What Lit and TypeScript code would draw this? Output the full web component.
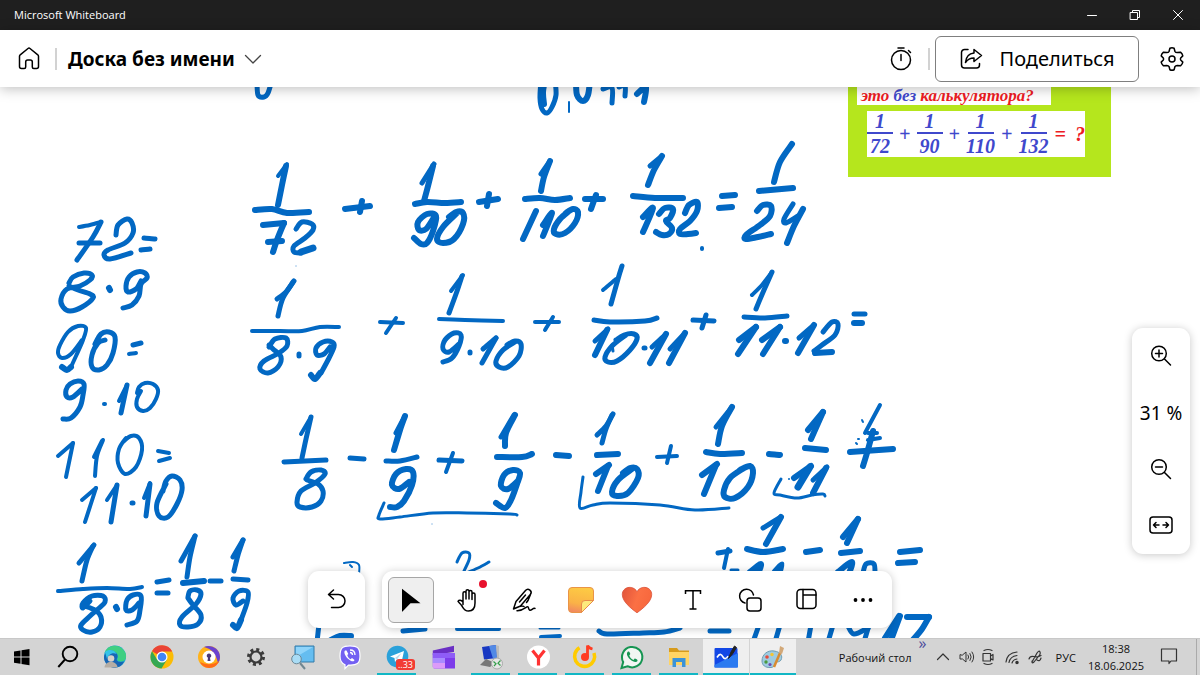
import { LitElement, html, svg, css } from "lit";
import { customElement } from "lit/decorators.js";

/* Pen strokes of the board: "width | x,y x,y ..." in board units. */
const INK: string[] = [
  // cut-off line under the header
  "5|257,80 258,95 264,97 268,93 272,80",
  "5|541,80 540,98 542,109 547,113 552,107 556,95 555,80", "6|545,80 543,92 544,104",
  "2|569,102 569,112", "6|576,80 577,95 583,101 588,95 590,80",
  "5|603,89 612,88 612,103", "5|619,87 625,86 625,96", "6|637,94 646,87 644,102",
  // first row
  "4|278,176 287,164", "6|286,166 282,185 278,205", "6|255,210 272,209 287,213 309,212",
  "6|263,225 284,223", "6|284,223 277,240 273,252", "6|268,242 282,241",
  "5|296,229 302,222 312,224 313,230 305,238 294,246 294,252 301,253", "7|301,252 313,248",
  "1|296,266 296,266",
  "6|345,209 370,206", "6|362,201 360,212",
  "5|422,183 434,164", "6|433,166 428,186 424,201", "6|415,204 427,202 445,203 461,202",
  "6|433,219 426,229 419,230 418,222 427,214 436,216 433,231 427,243 421,244 414,238",
  "6|456,214 443,227 437,239 443,243 454,239 463,224 463,213 456,212 449,217",
  "6|479,202 498,199", "6|489,194 487,206",
  "5|541,174 550,161", "6|550,161 544,177 541,191", "6|525,199 540,198 555,200 570,198",
  "6|536,211 523,239", "6|543,225 552,213 543,236", "6|569,211 560,219 554,229 556,234 565,233 575,223 578,212 573,209 566,213",
  "6|585,199 603,199", "6|596,195 591,209",
  "5|650,166 662,156", "6|662,156 654,170 648,185", "6|633,196 655,198 683,198",
  "6|643,217 653,208 643,232",
  "6|659,214 665,208 673,209 670,218 666,221 672,228 669,234 662,235 656,232",
  "6|685,213 689,205 697,202 697,211 690,221 680,229 680,234 688,234 696,233", "4|702,248 702,249",
  "6|722,196 735,195", "6|719,208 732,207",
  "6|792,144 780,162 774,182", "6|759,191 793,188",
  "6|757,211 763,205 771,206 770,216 760,225 746,235 746,239 758,237 771,234",
  "5|793,204 784,219 786,223 798,216", "6|803,209 794,226 787,243",
  // second row
  "5|277,299 286,292 293,282", "5|294,281 283,298 278,316", "4|252,331 280,331 302,331 320,327 339,327",
  "5|269,347 275,339 286,338 287,346 279,353 264,361 260,369 268,373 278,367 281,357 273,349 269,345",
  "5|299,354 299,356",
  "5|330,347 324,354 317,355 316,348 323,342 332,342 334,347 328,360 321,373", "6|320,373 315,379 311,375",
  "4|380,322 403,323", "4|396,318 386,333",
  "4|451,291 463,275", "5|462,276 456,294 449,313", "4|439,319 465,320 503,321",
  "5|459,344 449,352 443,349 445,340 454,333 461,335 459,346 452,358 443,362", "5|470,352 470,353",
  "5|483,349 496,338", "5|496,338 482,363", "5|515,342 503,350 496,361 499,367 508,367 519,356 521,344 515,341 507,345",
  "4|535,322 559,322", "4|553,317 545,330",
  "4|603,290 616,279", "5|622,266 618,279 611,304", "5|594,320 610,322 645,321 657,318",
  "5|595,341 608,329", "6|607,330 595,355", "3|613,351 612,345",
  "5|626,335 612,346 605,357 608,362 617,361 630,350 637,339 634,334 624,335 616,340", "5|644,348 645,348",
  "5|652,347 666,334", "6|666,334 650,363", "5|670,349 685,333", "6|685,333 669,363",
  "5|693,320 714,321", "5|706,315 702,328",
  "4|752,295 762,285 772,272", "5|772,272 764,290 756,309", "5|744,317 765,318 787,316",
  "6|739,340 756,327", "6|756,327 738,354", "6|762,340 780,327", "6|780,327 763,354", "6|785,341 786,341",
  "5|799,338 814,325", "6|814,325 798,353", "5|823,332 832,322 838,324 835,335 822,345 814,351", "6|815,353 832,352",
  "5|854,314 865,314", "6|854,323 862,323",
  // third row
  "4|301,434 311,417", "5|311,417 306,439 302,458", "5|284,462 326,460",
  "5|306,479 311,472 321,470 325,474 315,483 301,491 297,502 300,507 312,507 321,501 323,491 318,484 307,480",
  "5|350,458 364,459", "5|396,433 405,416", "6|405,416 400,430 394,450", "5|386,461 400,461 417,457",
  "6|409,482 399,489 392,485 396,474 406,469 413,472 412,485 404,501 397,507 390,507",
  "5|439,460 462,461", "4|453,453 446,472",
  "5|501,437 514,415", "6|515,415 506,433 505,446", "6|497,457 522,457 532,454",
  "6|518,481 508,489 501,486 504,475 513,470 520,473 517,484 511,500 505,508 496,503",
  "6|556,455 569,456",
  "3|384,503 379,515 380,519 400,517 433,513 467,513 510,514 517,515", "1|432,524 432,524",
  "5|597,435 606,426 613,414", "5|612,415 606,429 602,443", "6|597,455 618,454",
  "6|596,474 609,465", "6|608,466 598,491", "6|632,469 618,480 612,492 617,496 628,493 638,478 637,469 630,468 623,473",
  "3|583,477 581,492 580,508 593,505 610,503 660,505 695,510 729,508",
  "4|657,457 677,456", "4|671,446 667,463",
  "5|716,427 732,407", "6|732,407 722,426 718,444", "6|706,452 720,454 742,453",
  "6|702,475 717,464", "6|716,465 704,494", "6|744,468 730,478 724,490 725,497 735,498 748,487 753,473 750,466 740,470",
  "6|769,454 780,455",
  "6|808,430 823,412", "6|823,412 811,439", "6|805,448 826,450",
  "6|794,478 811,466", "7|810,467 798,487", "5|813,480 827,467", "6|826,468 813,493",
  "3|781,479 774,493 780,495 797,498 812,495 823,494 825,496", "2|789,479 789,479",
  "4|880,405 865,433", "6|873,431 867,453 863,466", "6|850,452 893,449", "4|868,440 880,438", "4|868,433 877,433",
  "2|862,420 863,422", "2|858,439 859,439", "2|856,443 857,444",
  // continuation under the third row
  "5|718,553 730,551", "4|728,549 724,568", "3|731,570 738,570",
  "5|763,528 781,517", "6|781,517 766,544", "6|747,549 763,552 783,549",
  "6|750,572 761,564 757,576", "5|774,572 782,564 779,576",
  "6|806,552 820,550", "6|843,537 858,519", "6|858,519 847,543", "6|841,553 860,551",
  "6|838,572 852,562 848,576", "5|863,573 866,564 874,564 875,576",
  "6|900,552 920,550", "6|898,563 915,562",
  "2|344,563 353,562 359,565 359,574", "2|350,565 352,567",
  "3|457,562 462,553 469,553 469,560 463,573", "3|466,573 478,568 489,562",
  "5|319,624 317,642", "6|331,640 340,636 351,636", "5|403,631 425,629", "4|457,629 499,629",
  "3|540,628 559,628", "4|541,637 560,636", "5|599,631 607,634 643,633 664,632 680,628", "5|710,631 729,631",
  "5|759,625 753,642", "5|780,625 775,642", "5|811,625 808,642", "5|833,625 828,642",
  "5|848,626 854,634 868,628", "5|869,625 864,642", "6|885,638 899,616", "6|900,616 891,640", "6|907,617 929,617", "6|929,617 922,629 912,641",
  // left column
  "4|79,227 90,225 101,222", "5|101,222 93,237 77,260", "5|79,243 100,243",
  "5|116,235 118,225 127,219 132,223 133,233 125,243 108,250 104,255 110,259 131,253",
  "5|144,238 155,239", "5|141,250 150,249",
  "5|69,283 73,277 84,273 92,275 90,280 80,286 67,289 61,299 63,307 70,311 82,307 93,298 90,294 78,290 69,286",
  "6|109,288 110,290",
  "5|141,281 136,289 128,292 126,286 129,277 137,272 145,273 147,278 141,284 139,296 132,305 123,308",
  "4|82,340 71,354 62,358 58,353 60,345 68,332 78,326 86,328 83,340 76,356 71,367", "6|71,367 67,370 62,367",
  "5|105,340 98,343 92,355 92,367 99,370 107,365 113,353 115,337 109,332 101,334 95,344",
  "5|133,345 141,343", "4|129,354 136,353",
  "5|82,389 73,397 67,397 66,390 70,384 78,381 84,384 83,395 80,407 71,418 63,419", "4|104,404 105,404",
  "4|119,401 127,385", "5|127,385 121,413",
  "4|141,391 137,399 137,407 143,411 150,408 156,399 158,390 153,384 145,383 139,387 137,393",
  "4|58,456 73,443", "4|73,443 66,477", "4|94,457 102,441", "4|103,440 97,456 95,476",
  "4|126,438 119,449 118,463 125,474 136,467 142,450 139,438 131,436 123,442",
  "4|158,451 169,453", "4|159,461 170,458",
  "4|82,500 96,488", "4|96,488 85,522", "4|107,500 117,485", "5|117,485 111,522", "5|132,503 133,503",
  "4|144,498 150,483", "5|150,484 146,516",
  "5|166,484 157,503 159,516 168,517 177,504 182,490 180,480 172,476 166,481 163,491",
  "5|79,563 94,545", "5|93,546 87,560 82,581", "4|58,591 83,589 107,588 130,589 142,587",
  "5|90,601 83,608 83,603 92,596 103,596 105,602 98,609 90,616 81,625 83,630 92,632 100,627 101,617 95,610 85,606",
  "6|116,607 117,609",
  "5|139,603 132,610 126,610 127,600 133,595 141,596 140,610 137,621 127,625",
  "5|157,582 169,580", "5|157,593 168,593",
  "5|181,561 195,536", "5|195,536 190,557 187,577", "6|183,583 204,581",
  "5|188,597 190,591 197,590 201,594 196,604 182,617 180,625 188,627 198,624 201,615 193,605 188,598",
  "5|210,581 221,581", "5|233,557 243,540", "5|243,540 238,555 234,571", "5|233,579 248,580",
  "5|243,601 236,605 233,598 239,591 248,592 247,603 241,620", "6|241,620 237,628 233,625",
];

/* Smooth a list of points into one curve that passes through all of them. */
function smooth(raw: string): string {
  const p = raw.split(" ").map((s) => s.split(",").map(Number));
  let d = `M${p[0][0]} ${p[0][1]}`;
  for (let i = 0; i < p.length - 1; i++) {
    const a = p[i - 1] ?? p[i], b = p[i], c = p[i + 1], e = p[i + 2] ?? c;
    const f = (n: number) => n.toFixed(1);
    d += `C${f(b[0] + (c[0] - a[0]) / 6)} ${f(b[1] + (c[1] - a[1]) / 6)} ${f(c[0] - (e[0] - b[0]) / 6)} ${f(c[1] - (e[1] - b[1]) / 6)} ${c[0]} ${c[1]}`;
  }
  return d;
}

const icon = (size: number, box: number, body: unknown) =>
  html`<svg width=${size} height=${size} viewBox="0 0 ${box} ${box}" fill="none" stroke="currentColor" stroke-width="1.5" stroke-linecap="round" stroke-linejoin="round" aria-hidden="true">${body}</svg>`;

@customElement("ink-layer")
class InkLayer extends LitElement {
  static styles = css`
    :host { display: block; }
    svg { display: block; }
  `;
  render() {
    return html`<svg width="1200" height="551" viewBox="0 87 1200 551" fill="none" stroke="#0268c3" stroke-linecap="round" stroke-linejoin="round" role="img" aria-label="1/72 + 1/90 + 1/110 + 1/132 = 1/24">
      ${INK.map((s) => {
        const [w, pts] = s.split("|");
        return svg`<path stroke-width=${w} d=${smooth(pts)}></path>`;
      })}
    </svg>`;
  }
}

@customElement("problem-card")
class ProblemCard extends LitElement {
  static styles = css`
    :host { display: block; background: #b5e61d; padding: 0 26px 20px 9px; font: italic bold 20px/20px "Liberation Serif", serif; color: #3f48cc; }
    .ask { width: max-content; background: #fff; font-size: 17px; line-height: 18px; padding: 0 17px 0 4px; margin-bottom: 6px; }
    .red { color: #ed1c24; }
    .sum { display: flex; align-items: center; justify-content: space-between; background: #fff; margin-left: 10px; height: 46px; }
    .frac { display: flex; flex-direction: column; align-items: center; }
    .top { border-bottom: 2px solid #3f48cc; padding: 0 8px; line-height: 21px; }
    .bot { line-height: 24px; }
    .eq { display: flex; gap: 9px; }
  `;
  render() {
    const f = (n: number) => html`<span class="frac"><span class="top">1</span><span class="bot">${n}</span></span>`;
    return html`
      <div class="ask"><span class="red">это</span> без <span class="red">калькулятора?</span></div>
      <div class="sum">${f(72)}<span>+</span>${f(90)}<span>+</span>${f(110)}<span>+</span>${f(132)}<span class="red eq"><span>=</span><span>?</span></span></div>
    `;
  }
}

const TOOLS: { label: string; art: unknown; active?: boolean; dot?: boolean }[] = [
  { label: "Выбрать", active: true, art: icon(24, 24, svg`<path fill="#000" stroke="none" d="M3 .8 21.500 15.200H11.500L3.500 23.500Q3 24 3 23Z"/>`) },
  { label: "Панорама", dot: true, art: icon(24, 24, svg`<path d="M7 13.500V5.200a1.500 1.500 0 0 1 3 0V11M10 11V3.300a1.500 1.500 0 0 1 3 0V11M13 11V4a1.500 1.500 0 0 1 3 0v7.500M16 11.500V6.500a1.500 1.500 0 0 1 3 0V15c0 5-2.500 8-6.500 8-4 0-5-2.500-6.500-5C4.500 15.500 2.500 14.500 2 13.300c1-1.500 3.200-1.300 5 .7v2.500"/>`) },
  { label: "Рукописный ввод", art: icon(24, 24, svg`<path d="M1.500 21 4 13.500 13.500 2.500a3.100 3.100 0 0 1 4.800 4L8.500 18ZM7.500 14 13.500 7M18.500 6.500 16 12.500 14.500 14.500M1.500 21C6 19 9 16.500 12 18.500M5 22.800C10 23 13 20 15 18.800c2-1 1 3 2.800 3.500S21 19.500 23 20.500"/>`) },
  { label: "Заметки", art: html`<svg width="28" height="28" viewBox="0 0 28 28" aria-hidden="true"><defs><linearGradient id="note" x1=".3" y1="0" x2=".1" y2="1"><stop offset="0" stop-color="#fdc944"/><stop offset=".6" stop-color="#fab247"/><stop offset="1" stop-color="#f08363"/></linearGradient></defs><path d="M5 1.500H23a3.500 3.500 0 0 1 3.500 3.500V14.500L14.500 26.500H5A3.500 3.500 0 0 1 1.500 23V5A3.500 3.500 0 0 1 5 1.500Z" fill="url(#note)" stroke="#e99447"/><path d="M26.500 14.500H18a3.500 3.500 0 0 0-3.500 3.500v8.500Z" fill="#fdea7c" stroke="#e88b4b"/></svg>` },
  { label: "Реакции", art: html`<svg width="32" height="28" viewBox="0 0 32 28" aria-hidden="true"><defs><linearGradient id="heart" x1="0" y1=".3" x2="1" y2=".6"><stop offset="0" stop-color="#e4573c"/><stop offset=".5" stop-color="#fb7044"/><stop offset="1" stop-color="#f7663c"/></linearGradient></defs><path d="M16 26.800C9.500 22 1.300 15.500 1.300 8.500 1.300 1 11.500-1.500 16 5.500 20.500-1.500 30.700 1 30.700 8.500 30.700 15.500 22.500 22 16 26.800Z" fill="url(#heart)" stroke="#d9523a" stroke-width=".8"/></svg>` },
  { label: "Текст", art: icon(24, 24, svg`<path stroke-linecap="butt" stroke-linejoin="miter" d="M3.500 6V2.700H18.500V6M11 2.500V21M7.500 21H14.500"/>`) },
  { label: "Фигуры", art: icon(24, 24, svg`<path d="M7 15A7 7 0 1 1 15.500 7"/><rect x="9" y="10" width="14" height="13" rx="3"/>`) },
  { label: "Шаблоны", art: icon(24, 24, svg`<rect x="2" y="1.500" width="19" height="19" rx="3.500"/><path d="M8 1.500V20.500M8 7H21"/>`) },
  { label: "Ещё", art: icon(24, 24, svg`<g fill="#000" stroke="none"><circle cx="4.500" cy="12" r="1.900"/><circle cx="12" cy="12" r="1.900"/><circle cx="19.500" cy="12" r="1.900"/></g>`) },
];

const art = (body: unknown) => html`<svg width="24" height="24" viewBox="0 0 24 24" aria-hidden="true">${body}</svg>`;

const APPS: { label: string; art: unknown; open?: boolean; lit?: boolean; badge?: string }[] = [
  { label: "Пуск", art: art(svg`<path d="M4 6.500 10.500 5.400V11.600H4ZM11.500 5.200 19.500 4V11.600H11.500ZM4 12.600H10.500V18.800L4 17.800ZM11.500 12.600H19.500V20.200L11.500 19Z"/>`) },
  { label: "Поиск", art: art(svg`<g fill="none" stroke="#000" stroke-width="1.900"><circle cx="14" cy="9" r="7.300"/><path d="M9 14.500 2.300 22"/></g>`) },
  { label: "Edge", art: art(svg`<circle cx="12" cy="11.500" r="11" fill="#1aa7d6"/><path d="M1.500 8C4 .5 13-1 18.500 3c5.500 4 6 11 2 13-3.500 1.500-7 0-6-2.500 2-4-2.500-8-7-7.500-3 .3-5 1.500-6 2Z" fill="#3fcf82"/><path d="M1 12c1-6 7-8 11-5 3 2 3 5 2 6.500-1 2 1 4.500 7 3-2 5-7 7-12 6C4 21 1 17 1 12Z" fill="#1766b5"/><path d="M2 7C6 3.500 12 5 13.500 9 9 7 5 10 4 14Z" fill="#35c3e8"/><circle cx="8" cy="13.500" r="3.300" fill="#d6d0c8"/><path d="M1.500 22.500c0-7.500 13-7.500 13 0Z" fill="#b5ada4"/>`) },
  { label: "Chrome", art: art(svg`<circle cx="12" cy="12" r="11.500" fill="#fbbc05"/><path d="M12 12 2 6.200A11.500 11.500 0 0 1 22.200 6.500H12Z" fill="#ea4335"/><path d="M2 6.200A11.500 11.500 0 0 0 11.500 23.500L17 14.500H7Z" fill="#34a853"/><circle cx="12" cy="12" r="5.500" fill="#fff"/><circle cx="12" cy="12" r="4.300" fill="#4285f4"/>`) },
  { label: "Браузер", art: art(svg`<circle cx="12" cy="12" r="11" fill="#ffb21a"/><path d="M7 2C13-1 23 3 23 12c0 3-1 5-2 6C19 9 15 4 7 2Z" fill="#6a42cf"/><path d="M3 17c4 2 12 4 19-1-2 6-8 8-13 6.500-3-1-5-3-6-5.500Z" fill="#ff6b19"/><circle cx="12" cy="12" r="6.500" fill="#fff"/><path d="M12 8.500a2.200 2.200 0 0 1 1 4.200l.5 3.300h-3l.5-3.300a2.200 2.200 0 0 1 1-4.200Z" fill="#4b3a78"/>`) },
  { label: "Параметры", art: art(svg`<circle cx="12" cy="12" r="5.500" fill="none" stroke="#3b3b3b" stroke-width="2.200"/><circle cx="12" cy="12" r="7.500" fill="none" stroke="#3b3b3b" stroke-width="3" stroke-dasharray="3 2.890"/>`) },
  { label: "Экранная лупа", art: art(svg`<path d="M4 1H23V17H4Z" fill="#65bdf0" stroke="#337ba8"/><path d="M5 2H22L5 12Z" fill="#8fd4fa"/><circle cx="5.500" cy="14" r="4.800" fill="#a9dcf5" stroke="#6b8796"/><path d="M9 18 14 24" stroke="#718791" stroke-width="2"/>`) },
  { label: "Viber", art: art(svg`<path d="M12 .8C4.500.8 2 3 2 11c0 5 1 7.500 5 8.700V23.500L10.500 20C19 20.500 22 18.500 22 11 22 3 19.500.8 12 .8Z" fill="#7360f2" stroke="#fff" stroke-width="1.200"/><path d="M7 5.500C5.500 7 7 11 10 13.700s6 3.500 6.500 1.300L14 13l-1.500 1.200C11 13.500 9.500 11.500 9.300 10l1-1L8.500 5.500Z" fill="#fff"/><path d="M12 5c3 0 5 2 5 5M12 7.500c1.700 0 2.500 1 2.500 2.500" fill="none" stroke="#fff" stroke-width="1.300"/>`) },
  { label: "Telegram", open: true, badge: "..33", art: art(svg`<circle cx="12.500" cy="11.500" r="10.800" fill="#2aa1da"/><path d="M5 11.500 19 6 16.500 17.500 12 14.500 10 17 9.500 13Z" fill="#fff"/><path d="M10 13 16.500 8 12 14.500Z" fill="#b8dcf0"/>`) },
  { label: "Clipchamp", art: art(svg`<path d="M.8 5.500 22 .8V7L.8 10Z" fill="#6a2fc4"/><path d="M.8 8.500H23V23.500H2.500A1.700 1.700 0 0 1 .8 21.800Z" fill="#7d3cea"/><path d="M.8 8H23V13H.8Z" fill="#8f5cf7"/><path d="M.8 13H13V18H.8Z" fill="#a98bff"/><path d="M.8 18H13V23.500H2.500A1.700 1.700 0 0 1 .8 21.800Z" fill="#dc9bf9"/>`) },
  { label: "Удалённый рабочий стол", open: true, art: art(svg`<path d="M3 2 17 0 18 13 5 14.500Z" fill="#1838c2"/><path d="M10 1 17 0 18 13 14 13.500Z" fill="#5289e5"/><path d="M17 0 20 1V14L18 13Z" fill="#bbb"/><path d="M1 20 7 14 16 18 11 22Z" fill="#777"/><circle cx="18" cy="18.500" r="5.500" fill="#e5e5e5" stroke="#aaa"/><path d="M14.500 16.500 17 18.800 15 21M21.500 15.500 19 18.200 21.500 20.500" fill="none" stroke="#329d48" stroke-width="1.200"/>`) },
  { label: "Яндекс Браузер", open: true, art: art(svg`<circle cx="12.500" cy="12" r="11.500" fill="#fff"/><path d="M6.500 5.500 12.500 13V20.500M18.500 5.500 12.500 13" fill="none" stroke="#f33" stroke-width="3.200"/>`) },
  { label: "Яндекс Музыка", open: true, art: art(svg`<path d="M6.500 2.800A10 10 0 1 0 21 8" fill="none" stroke="#ffcb00" stroke-width="3.600"/><circle cx="12" cy="12" r="4" fill="#ff3c22"/><path d="M14.500 12V.5C15.500 3 17.500 3.500 19.500 4" fill="none" stroke="#ff3c22" stroke-width="2.800"/>`) },
  { label: "WhatsApp", open: true, art: art(svg`<path d="M1.500 23 3.200 17A10.200 10.200 0 1 1 7.500 21.200Z" fill="#f2f6f3" stroke="#169552" stroke-width="2"/><path d="M8 6.500C6 8 7 11.500 10 14.300s6.500 3.500 7.500 1.700c.5-1.500-2-2.500-2.800-2.500L13.500 15C11.500 14 10 12.500 9.300 10.500L10.300 9C10 8 9.500 6 8 6.500Z" fill="#169552"/>`) },
  { label: "Проводник", open: true, art: art(svg`<path d="M2 3H10L12 5.500H22V19H2Z" fill="#d79b1c"/><path d="M2 7H22V20H2Z" fill="#ffd464"/><path d="M5.500 22V13H18.500V22H15V17H9V22Z" fill="#3c93d8"/>`) },
  { label: "Whiteboard", open: true, lit: true, art: art(svg`<rect x=".5" y="3" width="23" height="19.500" rx="1" fill="#1247e6"/><path d="M.5 20 24 8V22.500H.5Z" fill="#2b7af0"/><path d="M3 12.500C6 7.500 7.500 9.500 9 12s3.500 2 5-1" fill="none" stroke="#fff" stroke-width="1.600"/><path d="M14.500 13.500 17 7 20.500 1 22.500 2.500 18.500 9Z" fill="#222" stroke="#222"/>`) },
  { label: "Paint", open: true, lit: true, art: art(svg`<path d="M1 16C1 9 7 5 13 6c7 1 9 5 7 9-2 3-5 1-6 3s0 4-4 4.500C4 23 1 20 1 16Z" fill="#9fcbe0" stroke="#6f9db3"/><circle cx="6" cy="12" r="1.800" fill="#e64a3a"/><circle cx="11" cy="9.500" r="1.700" fill="#f4c431"/><circle cx="5" cy="17" r="1.700" fill="#4a9b3d"/><circle cx="9" cy="19.500" r="1.600" fill="#6a4bb5"/><path d="M13 22 19 8" stroke="#d98b30" stroke-width="2.500"/><path d="M18 8 19 1 23 3 21 9Z" fill="#d2a878"/>`) },
];

@customElement("app-root")
class AppRoot extends LitElement {
  static styles = css`
    :host { display: flex; flex-direction: column; height: 100vh; overflow: hidden; background: #fff; color: #000; font-family: "Noto Sans", "Open Sans", sans-serif; }
    * { box-sizing: border-box; }
    button { font: inherit; color: inherit; background: none; border: 0; padding: 0; margin: 0; display: flex; align-items: center; justify-content: center; flex: none; }
    svg { display: block; flex: none; overflow: visible; }

    .titlebar { display: flex; align-items: center; height: 30px; flex: none; background: #1f1f1f; color: #fff; font: 11px/30px "Open Sans", sans-serif; padding: 0 1px 0 14px; }
    .titlebar span { flex: 1; }
    .titlebar button { width: 43px; height: 30px; }

    .header { display: flex; align-items: center; height: 57px; flex: none; background: #fff; padding: 0 16px; position: relative; z-index: 2; box-shadow: 0 2px 12px rgba(0, 0, 0, .25); }
    .rule { width: 2px; height: 22px; background: #d2d2d2; flex: none; }
    .home { width: 26px; height: 40px; margin-right: 13px; }
    .name { font-size: 19px; font-weight: 700; gap: 10px; margin-left: 11px; height: 40px; }
    .name svg { color: #444; }
    .grow { flex: 1; }
    .timer { width: 26px; height: 40px; margin-right: 14px; }
    .share { width: 204px; height: 46px; border: 1px solid #7f7f7f; border-radius: 6px; margin: 0 21px 0 5px; font-size: 20px; gap: 16px; }

    .board { position: relative; flex: 1; min-height: 0; overflow: hidden; }
    ink-layer { position: absolute; left: 0; top: 0; }
    problem-card { position: absolute; left: 848px; top: 0; width: 263px; }
    .panel { background: #fff; border-radius: 11px; box-shadow: 0 1px 9px rgba(0, 0, 0, .22); }
    .dock { position: absolute; left: 0; right: 0; bottom: 10px; display: flex; justify-content: center; gap: 17px; }
    .undo { width: 57px; height: 57px; }
    .tools { width: 510px; height: 57px; padding: 0 6px; display: flex; align-items: center; justify-content: space-between; }
    .tool { width: 46px; height: 46px; border-radius: 6px; position: relative; }
    .tool.active { background: #efefef; border: 1px solid #a6a6a6; }
    .dot { position: absolute; right: 4px; top: 3px; width: 8px; height: 8px; border-radius: 50%; background: #e8112d; }
    .zoom { position: absolute; right: 10px; bottom: 84px; width: 58px; padding: 1px 0; font-size: 19px; line-height: 24px; text-align: center; white-space: nowrap; }
    .zoom button, .zoom output { display: flex; align-items: center; justify-content: center; width: 100%; height: 56px; }

    .taskbar { display: flex; align-items: stretch; height: 37px; flex: none; background: #d4d4d4; border-top: 1px solid #c8c8c8; font: 11px/17px "Open Sans", sans-serif; color: #111; }
    .app { width: 47px; position: relative; }
    .app:first-child { width: 44px; }
    .app.open::after { content: ""; position: absolute; bottom: 0; left: 4px; right: 4px; height: 2px; background: #12b7c5; }
    .app.lit { background: #efefef; border-left: 1px solid #d4d4d4; }
    .app.lit::after { left: 0; right: 0; }
    .badge { position: absolute; right: 5px; bottom: 5px; background: #f23c34; color: #fff; border-radius: 3px; font-size: 9px; line-height: 11px; padding: 0 2px; }
    .tray { display: flex; align-items: center; }
    .desk { margin-right: 7px; }
    .more { align-self: flex-start; font-size: 16px; line-height: 8px; color: #4b4b9b; width: 13px; margin-right: 4px; }
    .tray svg { width: 16px; height: 16px; margin-right: 7px; color: #333; }
    .lang { margin: 0 12px 0 5px; }
    .clock { display: flex; flex-direction: column; align-items: center; margin-right: 16px; }
    .note { width: 18px; height: 36px; margin-right: 18px; }
    .tray .note svg { margin: 0; width: 18px; height: 18px; }
    .peek { width: 4px; height: 36px; border-left: 1px solid #aaa; }
  `;

  render() {
    return html`
      <div class="titlebar">
        <span>Microsoft Whiteboard</span>
        <button aria-label="Свернуть">${icon(10, 10, svg`<path stroke-width="1" d="M.5 5.500H9.500"/>`)}</button>
        <button aria-label="Свернуть в окно">${icon(10, 10, svg`<path stroke-width="1" d="M.5 2.500H7.500V9.500H.5ZM2.500 2.500V.5H9.500V7.500H7.500"/>`)}</button>
        <button aria-label="Закрыть">${icon(10, 10, svg`<path stroke-width="1" d="M.5.5 9.500 9.500M9.500.5.5 9.500"/>`)}</button>
      </div>

      <header class="header">
        <button class="home" aria-label="Главная">${icon(24, 24, svg`<path d="M2.500 9.300Q2.500 8.400 3.200 7.800L11 1.500Q12 .7 13 1.500L20.800 7.800Q21.500 8.400 21.500 9.300V19.500a2 2 0 0 1-2 2H16.800a1.500 1.500 0 0 1-1.500-1.500V15a2 2 0 0 0-2-2h-2.600a2 2 0 0 0-2 2V20a1.500 1.500 0 0 1-1.500 1.500H4.500a2 2 0 0 1-2-2Z"/>`)}</button>
        <span class="rule"></span>
        <button class="name">Доска без имени ${icon(16, 16, svg`<path stroke-width="1.300" d="M.5 4.500 8 12 15.500 4.500"/>`)}</button>
        <span class="grow"></span>
        <button class="timer" aria-label="Таймер">${icon(24, 24, svg`<circle cx="12" cy="13" r="9.500"/><path d="M12 7.500V13.500M9 1H15M19.500 3.500 21.500 5.500"/>`)}</button>
        <span class="rule"></span>
        <button class="share">${icon(24, 24, svg`<path d="M9 2.500H5.500A3 3 0 0 0 2.500 5.500V18A3 3 0 0 0 5.500 21H17.500A3 3 0 0 0 20.500 18V16.500M15 2.500 22.500 8.500 15 14.500V11C11 11 8.500 12.500 6.500 15.500 7 10 10 6.500 15 6Z"/>`)}Поделиться</button>
        <button aria-label="Параметры">${icon(24, 24, svg`<circle cx="12" cy="12" r="3"/><path d="M9.900 1.300Q12 .3 14.100 1.300L14.900 4.300Q15.600 5.500 17.200 5.600L20.500 5.200Q22.500 6.800 22.800 8.900L20.700 11Q20.100 12 20.700 13L22.800 15.100Q22.500 17.200 20.500 18.800L17.200 18.400Q15.600 18.500 14.900 19.700L14.100 22.700Q12 23.700 9.900 22.700L9.100 19.700Q8.400 18.500 6.800 18.400L3.500 18.800Q1.500 17.200 1.200 15.100L3.300 13Q3.900 12 3.300 11L1.200 8.900Q1.500 6.800 3.500 5.200L6.800 5.600Q8.400 5.500 9.100 4.300Z"/>`)}</button>
      </header>

      <main class="board">
        <problem-card></problem-card>
        <ink-layer></ink-layer>
        <div class="panel zoom">
          <button aria-label="Увеличить">${icon(24, 24, svg`<circle cx="10" cy="8.500" r="7.300"/><path d="M15.500 14 21.500 20M10 5V12M6.500 8.500H13.500"/>`)}</button>
          <output>31 %</output>
          <button aria-label="Уменьшить">${icon(24, 24, svg`<circle cx="10" cy="10" r="7.300"/><path d="M15.500 15.500 21.500 21.500M6.500 10H13.500"/>`)}</button>
          <button aria-label="По размеру окна">${icon(24, 24, svg`<rect x="1" y="4" width="22" height="16" rx="3"/><path d="M4.500 12H10M14 12H19.500M7 9.500 4.500 12 7 14.500M17 9.500 19.500 12 17 14.500"/>`)}</button>
        </div>
        <div class="dock">
          <button class="panel undo" aria-label="Отменить">${icon(24, 24, svg`<path d="M8.500 2 3.500 6.500 8.500 11M4 6.500H13.500a6.500 6.500 0 0 1 0 13H6.500"/>`)}</button>
          <div class="panel tools" role="toolbar">
            ${TOOLS.map((t) => html`<button class="tool ${t.active ? "active" : ""}" aria-label=${t.label}>${t.art}${t.dot ? html`<span class="dot"></span>` : ""}</button>`)}
          </div>
        </div>
      </main>

      <footer class="taskbar">
        ${APPS.map((a) => html`<button class="app ${a.open ? "open" : ""} ${a.lit ? "lit" : ""}" aria-label=${a.label}>${a.art}${a.badge ? html`<span class="badge">${a.badge}</span>` : ""}</button>`)}
        <span class="grow"></span>
        <div class="tray">
          <span class="desk">Рабочий стол</span>
          <span class="more">»</span>
          ${icon(16, 16, svg`<path stroke-width="1.200" d="M1.500 10.500 7 5 12.500 10.500"/>`)}
          ${icon(16, 16, svg`<path stroke-width="1" d="M1 6V10H3.500L7 13V3L3.500 6ZM9 6Q10.500 8 9 10M11 4.500Q13.500 8 11 11.500M13 3Q16.500 8 13 13"/>`)}
          ${icon(16, 16, svg`<path stroke-width="1.200" d="M1 4.500H8.500V12H1ZM8.500 7 11 5.500V11L8.500 9.500M2 1.500Q6-.5 10 1.500M2 14.500Q6 16.500 10 14.500"/>`)}
          ${icon(16, 16, svg`<path stroke-width="1.200" d="M1 13Q2 4 12 3M4 13.500Q5 7.500 12 6.500M7 14Q8 10.500 12 10"/><circle cx="12" cy="13.500" r="1" fill="#333"/>`)}
          ${icon(16, 16, svg`<path stroke-width="1.200" d="M4 13 9 4Q11 1 12 3T10 8L6 13Q3.500 15 4 12M1 10Q2 6.500 6 7.500T13 6.500M9 11Q12 13 13 9"/>`)}
          <span class="lang">РУС</span>
          <span class="clock"><time>18:38</time><time>18.06.2025</time></span>
          <button class="note" aria-label="Уведомления">${icon(18, 18, svg`<path stroke-width="1.200" d="M1.500 1H16.500V13H11L9 15.500V13H1.500Z"/>`)}</button>
          <span class="peek"></span>
        </div>
      </footer>
    `;
  }
}
